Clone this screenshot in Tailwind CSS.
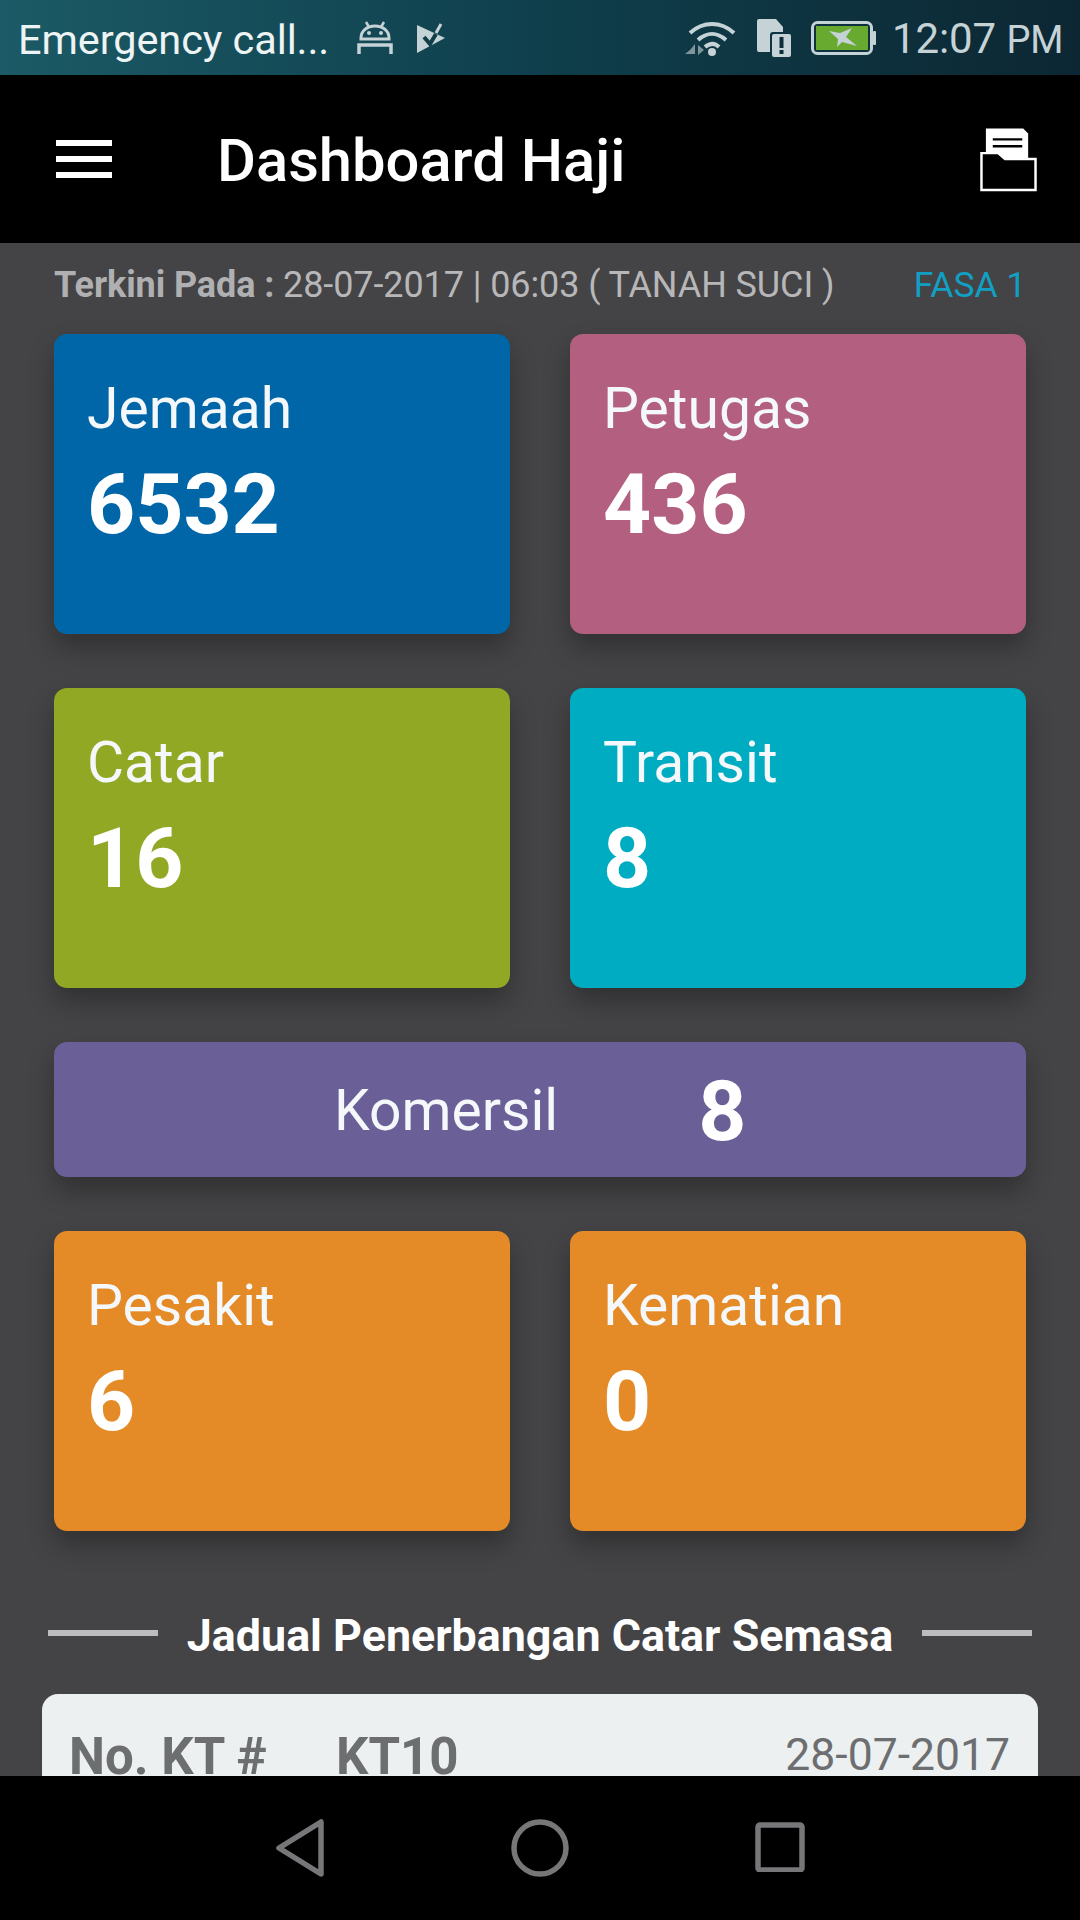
<!DOCTYPE html>
<html>
<head>
<meta charset="utf-8">
<script src="https://cdn.jsdelivr.net/npm/@tailwindcss/browser@4"></script>
</head>
<body class="m-0 bg-black">
<div class="w-[1080px] h-[1920px] flex flex-col overflow-hidden font-['Roboto',sans-serif] text-white">
  <!-- status bar -->
  <div class="h-[75px] shrink-0 flex items-center bg-gradient-to-r from-[#1b5a66] via-[#0f3f4c] to-[#0c2733]">
    <span class="ml-[18px] pt-[4px] text-[41.500px] leading-[71px] text-[#eef3f3] w-[339px] whitespace-nowrap tracking-[-0.1px]">Emergency call...</span>
    <svg width="36" height="36" viewBox="0 0 36 36" fill="none"><path d="M4 18C4 11 10 6 18 6s14 5 14 12v1H4z" stroke="#c5d2d6" stroke-width="3"/><path d="M9 2l3 5M27 2l-3 5" stroke="#c5d2d6" stroke-width="2.5"/><circle cx="12" cy="13" r="2" fill="#c5d2d6"/><circle cx="24" cy="13" r="2" fill="#c5d2d6"/><path d="M2 34v-9h32v9" stroke="#c5d2d6" stroke-width="3.5"/></svg>
    <svg class="ml-[23px]" width="30" height="32" viewBox="0 0 30 32"><path d="M1 3l28 13L1 31z" fill="#c5d2d6"/><path d="M8 15l6 7L20 12" stroke="#123e4a" stroke-width="4" fill="none"/><path d="M20 11L25 2" stroke="#c5d2d6" stroke-width="3" fill="none"/></svg>
    <svg class="ml-[237px]" width="56" height="40" viewBox="0 0 56 40" fill="none"><path d="M7 15C20 3 38 3 51 15" stroke="#c5d2d6" stroke-width="4"/><path d="M15 22c9-8 19-8 28 0" stroke="#c5d2d6" stroke-width="4"/><path d="M22 29c5-4 10-4 14 0" stroke="#c5d2d6" stroke-width="4"/><circle cx="29" cy="34" r="4" fill="#c5d2d6"/><path d="M7 32l5-6v10H2zM15 27l6 5-6 5z" fill="#7f949b"/></svg>
    <svg class="ml-[17px]" width="36" height="38" viewBox="0 0 36 38"><path d="M1 2a2 2 0 0 1 2-2h17l7 8v5H17a3 3 0 0 0-3 3v17H3a2 2 0 0 1-2-2z" fill="#c5d2d6"/><rect x="16" y="15" width="19" height="23" rx="2" fill="#c5d2d6"/><rect x="23.500" y="18" width="4" height="11" fill="#0c2d39"/><rect x="23.500" y="31" width="4" height="4" fill="#0c2d39"/></svg>
    <svg class="ml-[19px]" width="66" height="34" viewBox="0 0 66 34"><rect x="1.500" y="1.500" width="59" height="31" rx="5" fill="none" stroke="#c5d2d6" stroke-width="3"/><rect x="5" y="5" width="52" height="24" fill="#68a92f"/><rect x="62" y="10" width="3" height="14" rx="1" fill="#c5d2d6"/><path d="M18 10L29 12L41 7L35 16L46 25L31 21L26 26L27 18Z" fill="#c5d2d6"/></svg>
    <span class="ml-[15px] pt-[3px] text-[42px] leading-[72px] text-[#c5d2d6] whitespace-nowrap tracking-[-0.1px]">12:07 <span class="text-[38px]">PM</span></span>
  </div>
  <!-- app bar -->
  <div class="h-[168px] shrink-0 bg-black flex items-center">
    <div class="ml-[56px] w-[56px] flex flex-col gap-[10px]">
      <div class="h-[6px] bg-white"></div><div class="h-[6px] bg-white"></div><div class="h-[6px] bg-white"></div>
    </div>
    <span class="ml-[105px] pt-[4px] text-[59.700px] leading-[66px] font-medium whitespace-nowrap">Dashboard Haji</span>
    <svg class="ml-auto mr-[43px] mt-[2px]" width="57" height="64" viewBox="0 0 58 64"><path d="M6 0h38l5 5v29H6z" fill="#fff"/><path d="M13 11h30M13 18h30" stroke="#000" stroke-width="2.500"/><path d="M1.500 25h17l7 6h31v31.500H1.500z" fill="#000" stroke="#fff" stroke-width="2.500"/></svg>
  </div>
  <!-- content -->
  <div class="h-[1533px] shrink-0 overflow-hidden bg-[#444345]">
    <div class="h-[91px] pb-[8px] pl-[54px] pr-[54px] flex items-center justify-between text-[36px] leading-[50px] tracking-[-0.1px]">
      <span class="text-[#b7b7b9] whitespace-nowrap"><b class="font-bold text-[#b0b0b2]">Terkini Pada :</b> 28-07-2017 | 06:03 ( TANAH SUCI )</span>
      <span class="text-[35.500px] text-[#119fc4] whitespace-nowrap">FASA 1</span>
    </div>
    <div class="px-[54px] flex flex-col gap-[54px]">
      <div class="grid grid-cols-2 gap-x-[60px] gap-y-[54px]">
        <div class="h-[300px] rounded-[13px] bg-[#0066a8] shadow-[0_14px_26px_rgba(0,0,0,0.28)] pl-[33px] pt-[42px]">
          <div class="text-[57px] leading-[66px] text-[#f5f8fb]">Jemaah</div>
          <div class="mt-[21px] text-[84px] leading-[84px] font-bold">6532</div>
        </div>
        <div class="h-[300px] rounded-[13px] bg-[#b35f80] shadow-[0_14px_26px_rgba(0,0,0,0.28)] pl-[33px] pt-[42px]">
          <div class="text-[57px] leading-[66px] text-[#f5f8fb]">Petugas</div>
          <div class="mt-[21px] text-[84px] leading-[84px] font-bold">436</div>
        </div>
        <div class="h-[300px] rounded-[13px] bg-[#90a823] shadow-[0_14px_26px_rgba(0,0,0,0.28)] pl-[33px] pt-[42px]">
          <div class="text-[57px] leading-[66px] text-[#f5f8fb]">Catar</div>
          <div class="mt-[21px] text-[84px] leading-[84px] font-bold">16</div>
        </div>
        <div class="h-[300px] rounded-[13px] bg-[#00acc1] shadow-[0_14px_26px_rgba(0,0,0,0.28)] pl-[33px] pt-[42px]">
          <div class="text-[57px] leading-[66px] text-[#f5f8fb]">Transit</div>
          <div class="mt-[21px] text-[84px] leading-[84px] font-bold">8</div>
        </div>
      </div>
      <div class="h-[135px] rounded-[13px] bg-[#6a6097] shadow-[0_14px_26px_rgba(0,0,0,0.28)] flex items-center pl-[280px]">
        <span class="text-[57px] leading-[66px] text-[#f5f8fb] mt-[3px]">Komersil</span>
        <span class="ml-[140px] text-[84px] leading-[84px] font-bold mt-[5px]">8</span>
      </div>
      <div class="grid grid-cols-2 gap-x-[60px]">
        <div class="h-[300px] rounded-[13px] bg-[#e48a26] shadow-[0_14px_26px_rgba(0,0,0,0.28)] pl-[33px] pt-[42px]">
          <div class="text-[57px] leading-[66px] text-[#f5f8fb]">Pesakit</div>
          <div class="mt-[21px] text-[84px] leading-[84px] font-bold">6</div>
        </div>
        <div class="h-[300px] rounded-[13px] bg-[#e48a26] shadow-[0_14px_26px_rgba(0,0,0,0.28)] pl-[33px] pt-[42px]">
          <div class="text-[57px] leading-[66px] text-[#f5f8fb]">Kematian</div>
          <div class="mt-[21px] text-[84px] leading-[84px] font-bold">0</div>
        </div>
      </div>
    </div>
    <div class="mt-[77px] mx-[48px] flex items-center justify-between h-[56px]">
      <div class="w-[110px] h-[6px] bg-[#bdbcbe] -mt-[6px]"></div>
      <span class="text-[44.800px] leading-[56px] font-bold whitespace-nowrap">Jadual Penerbangan Catar Semasa</span>
      <div class="w-[110px] h-[6px] bg-[#bdbcbe] -mt-[6px]"></div>
    </div>
    <div class="mt-[30px] mx-[42px] h-[300px] rounded-t-[16px] bg-[#ecf0f1] pl-[27px] pr-[28px] pt-[35px] flex justify-between items-start">
      <div class="flex text-[51px] leading-[56px] font-bold text-[#6d6e70]">
        <span class="w-[267px]">No. KT #</span><span>KT10</span>
      </div>
      <span class="text-[44.500px] leading-[50px] text-[#6d6e70] mt-[1px]">28-07-2017</span>
    </div>
  </div>
  <!-- nav bar -->
  <div class="h-[144px] shrink-0 bg-black relative">
    <svg class="absolute left-[274px] top-[43px]" width="52" height="58" viewBox="0 0 52 58" fill="none"><path d="M47 3v52L5 29z" stroke="#777779" stroke-width="5.500" stroke-linejoin="round"/></svg>
    <svg class="absolute left-[511px] top-[43px]" width="58" height="58" viewBox="0 0 58 58" fill="none"><circle cx="29" cy="29" r="26" stroke="#777779" stroke-width="5.500"/></svg>
    <svg class="absolute left-[755px] top-[46px]" width="50" height="50" viewBox="0 0 50 50" fill="none"><rect x="3" y="3" width="44" height="45" rx="2" stroke="#777779" stroke-width="5.500"/></svg>
  </div>
</div>
</body>
</html>
